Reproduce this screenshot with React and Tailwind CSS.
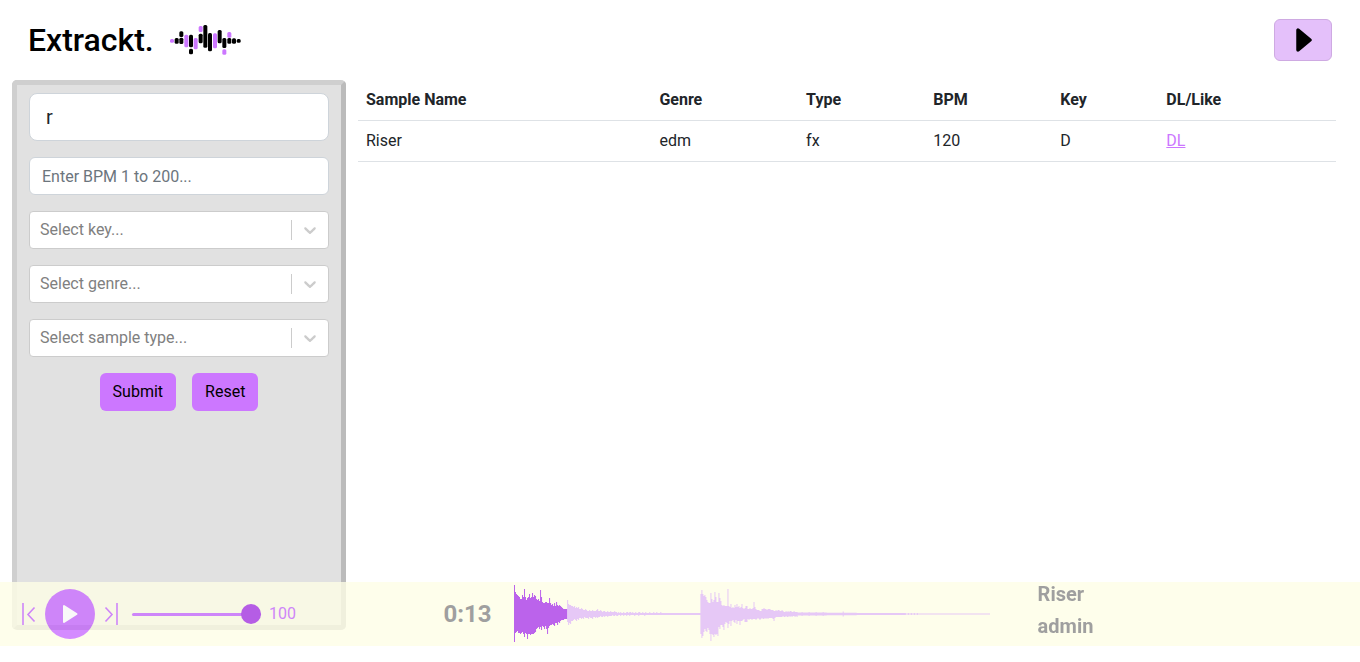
import React, { useState } from "react";

const LOGO_BARS = [
  [35, 72, 83, "p"], [49, 69, 86], [63, 49, 66], [63, 68, 87], [78, 59, 97, "p"],
  [92, 59, 97], [92, 101, 118], [106, 69, 103, "p"], [121, 33, 51, "p"], [121, 56, 85],
  [135, 30, 98], [149, 54, 109], [164, 55, 100, "p"], [178, 45, 85], [192, 69, 99],
  [192, 103, 119, "p"], [207, 51, 68, "p"], [207, 69, 86], [221, 70, 86], [235, 72, 83],
];

// Peak heights above and below the centre line, one pair per horizontal unit.
const UP_A = [29, 22, 20, 19, 18, 17, 15, 15, 19, 17, 25, 17, 14, 16, 17, 20, 16, 17, 21, 17, 19, 18, 15, 14, 15, 13, 24, 17, 12, 11, 11, 12, 12, 11, 11, 16, 11, 9, 10, 8, 11, 8, 12, 9, 8, 9, 8, 7, 6, 5, 5, 5, 5,
  14, 10, 9, 9, 8, 8, 7, 8, 6, 7, 6, 7, 5, 5, 6, 5, 4, 4, 5, 4, 3, 3, 4, 3, 3, 4, 3, 3, 3, 4, 5, 3, 3, 4, 3, 2, 3, 3, 2, 2, 3, 2, 2, 3, 2, 2, 2, 3, 2, 2, 1, 2, 1, 2, 1, 1, 2, 1, 1, 2, 2, 1, 2, 2, 1, 2, 1, 1, 2, 1, 1, 2, 2, 1, 1, 2, 1, 1, 2, 1, 1, 1, 2, 1, 1, 1, 2, 1, 1, 2, 1, 1, 1, 2, 1, 1];
const DOWN_A = [28, 19, 18, 17, 19, 19, 20, 19, 18, 20, 23, 19, 20, 25, 20, 20, 21, 20, 20, 20, 19, 18, 15, 14, 13, 15, 13, 16, 12, 13, 15, 12, 15, 20, 14, 12, 11, 11, 10, 11, 12, 9, 9, 11, 8, 9, 7, 6, 6, 6, 5, 5, 5,
  8, 11, 9, 10, 7, 7, 6, 5, 6, 7, 5, 6, 4, 4, 5, 4, 5, 3, 4, 4, 4, 5, 3, 4, 4, 5, 3, 3, 4, 3, 4, 3, 3, 2, 3, 3, 2, 3, 2, 2, 3, 2, 2, 2, 2, 1, 2, 2, 1, 2, 2, 1, 1, 2, 1, 1, 2, 1, 1, 2, 1, 1, 2, 1, 1, 1, 1, 2, 1, 1, 1, 2, 1, 1, 1, 1, 1, 2, 1, 1, 1, 1, 1, 1, 1, 1, 1, 1, 1, 1, 1, 1, 1, 1, 1, 1];
const UP_B = [24, 20, 18, 19, 17, 14, 12, 11, 11, 21, 15, 12, 14, 22, 17, 12, 12, 21, 16, 13, 9, 8, 9, 8, 8, 8, 25, 8, 7, 10, 6, 7, 6, 9, 7, 10, 7, 8, 6, 7, 10, 6, 5, 6, 8, 8, 5, 5, 6, 5, 5, 6, 12, 7, 5, 4, 4, 4, 3, 3, 5, 5, 6, 5, 5, 4, 5, 5, 5, 4, 4, 4, 3, 3, 4, 3, 4, 4, 3, 3, 4, 3, 2, 2, 3, 2, 3, 2, 3, 3, 2, 2, 3, 2, 2, 2];
const DOWN_B = [24, 22, 18, 15, 17, 18, 14, 16, 20, 27, 20, 21, 23, 20, 21, 20, 22, 13, 15, 11, 11, 13, 16, 10, 8, 9, 14, 10, 7, 12, 7, 6, 8, 9, 6, 10, 7, 7, 11, 7, 7, 6, 5, 8, 8, 8, 5, 6, 5, 5, 6, 5, 5, 5, 6, 5, 4, 5, 6, 5, 4, 5, 5, 4, 5, 4, 5, 4, 4, 4, 4, 5, 7, 4, 3, 3, 3, 3, 3, 3, 3, 2, 3, 3, 2, 3, 3, 2, 3, 2, 3, 2, 2, 3, 2, 3];

function peakAt(x, first, second) {
  if (x < 186) return first[x] ?? 1;
  if (x < 187) return 20;
  if (x < 187 + second.length) return second[x - 187];
  if (x < 312) return x % 7 === 0 ? 2 : 1.5;
  if (x < 342) return x === 328 ? 2.5 : 1.2;
  if (x < 390) return 1;
  return x < 404 && x % 3 === 0 ? 1 : 0.4;
}

// Stepped outline: each unit is drawn as a flat-topped column.
function wavePath(from, to) {
  const top = [];
  const bottom = [];
  for (let x = from; x < to; x += 1) {
    const up = 29 - peakAt(x, UP_A, UP_B);
    const down = 29 + peakAt(x, DOWN_A, DOWN_B);
    top.push(`${x} ${up}`, `${x + 1} ${up}`);
    bottom.unshift(`${x + 1} ${down}`, `${x} ${down}`);
  }
  return `M${top.concat(bottom).join("L")}Z`;
}

function Logo() {
  return (
    <svg viewBox="29 27 213 96" className="h-8 w-[71px]" aria-hidden="true">
      {LOGO_BARS.map(([x, y1, y2, tone]) => (
        <rect key={`${x}-${y1}`} x={x - 6} y={y1} width="12" height={y2 - y1} rx="4.5" fill={tone ? "#cc77ff" : "#000"} />
      ))}
    </svg>
  );
}

function SelectBox({ id, label, options }) {
  return (
    <div className="relative">
      <select id={id} aria-label={label} defaultValue="" className="block h-[38px] w-full appearance-none rounded border border-[#cccccc] bg-white pr-10 pl-[10px] text-base leading-6 text-[#808080]">
        <option value="">{label}</option>
        {options.map((o) => <option key={o}>{o}</option>)}
      </select>
      <div className="pointer-events-none absolute inset-y-0 right-px flex items-center">
        <span className="h-5 w-px bg-[#cccccc]" />
        <svg viewBox="0 0 20 20" className="mx-2 size-5 fill-[#cccccc]" aria-hidden="true">
          <path d="M4.516 7.548c0.436-0.446 1.043-0.481 1.576 0l3.908 3.747 3.908-3.747c0.533-0.481 1.141-0.446 1.574 0 0.436 0.445 0.408 1.197 0 1.615-0.406 0.418-4.695 4.502-4.695 4.502-0.217 0.223-0.502 0.335-0.787 0.335s-0.57-0.112-0.789-0.335c0 0-4.287-4.084-4.695-4.502s-0.436-1.17 0-1.615z" />
        </svg>
      </div>
    </div>
  );
}

function Player() {
  const [volume, setVolume] = useState(100);
  return (
    <footer className="fixed inset-x-0 bottom-4 grid h-16 grid-cols-[31%_92px_35%_1fr] items-center bg-[#fefee6] opacity-80">
      <div className="flex items-center pl-[21px] text-[#ca6fff]">
        <button type="button" aria-label="Previous" className="flex">
          <svg viewBox="0 0 16 24" className="h-6 w-4 fill-none stroke-current" aria-hidden="true">
            <path d="M2 1v22" strokeWidth="1.6" />
            <path d="M13.500 5.500L7 12.500l6.500 7" strokeWidth="1.600" />
          </svg>
        </button>
        <button type="button" aria-label="Play" className="mx-2 flex size-[50px] items-center justify-center rounded-full bg-[#ca6fff]">
          <svg viewBox="0 0 16 20" className="h-5 w-4 fill-white stroke-white" aria-hidden="true">
            <path d="M2 2v16L14.500 10z" strokeWidth="2" strokeLinejoin="round" />
          </svg>
        </button>
        <button type="button" aria-label="Next" className="flex">
          <svg viewBox="0 0 16 24" className="h-6 w-4 fill-none stroke-current" aria-hidden="true">
            <path d="M14 1v22" strokeWidth="1.6" />
            <path d="M2.500 5.500L9 12.500l-6.500 7" strokeWidth="1.600" />
          </svg>
        </button>
        <input
          type="range"
          id="volume"
          aria-label="Volume"
          min="0"
          max="100"
          value={volume}
          onChange={(e) => setVolume(Number(e.target.value))}
          className="ml-[13px] h-[3px] w-[129px] appearance-none rounded-full bg-[#ca6fff] [&::-webkit-slider-thumb]:size-5 [&::-webkit-slider-thumb]:appearance-none [&::-webkit-slider-thumb]:rounded-full [&::-webkit-slider-thumb]:bg-[#aa3ce6]"
        />
        <output htmlFor="volume" className="ml-2 text-base">{volume}</output>
      </div>
      <div className="text-center text-2xl font-bold text-[#888888]">0:13</div>
      <svg viewBox="0 0 475 58" preserveAspectRatio="none" className="h-[58px] w-full" role="img" aria-label="Waveform">
        <path d={wavePath(53, 475)} fill="#e0bbf4" />
        <path d={wavePath(0, 53)} fill="#aa3ce6" />
      </svg>
      <div className="self-start pl-12 text-xl leading-8 font-bold text-[#888888]">
        <p className="-mt-1">Riser</p>
        <p>admin</p>
      </div>
    </footer>
  );
}

export default function App() {
  return (
    <div className="min-h-screen bg-white font-['Roboto',sans-serif] text-base text-[#212529]">
      <header className="flex h-20 items-center justify-between px-7">
        <div className="flex items-center gap-4">
          <h1 className="text-[32px] font-medium text-black">Extrackt.</h1>
          <Logo />
        </div>
        <button type="button" aria-label="Open player" className="flex h-[42px] w-[58px] items-center justify-center rounded-md border border-[#ceaae2] bg-[#e4c0fa]">
          <svg viewBox="0 0 16 24" className="ml-0.5 h-6 w-4" aria-hidden="true">
            <path d="M2 2v20L14 12z" fill="#000" stroke="#000" strokeWidth="3.500" strokeLinejoin="round" />
          </svg>
        </button>
      </header>
      <main className="grid grid-cols-4 px-3">
        <form onSubmit={(e) => e.preventDefault()} className="flex min-h-[calc(100vh-112px)] flex-col gap-4 rounded-[5px] border-[5px] border-t-[#cfcfcf] border-r-[#bbbbbb] border-b-[#bbbbbb] border-l-[#cfcfcf] bg-[#e1e1e1] px-3 py-2">
          <input type="text" aria-label="Search samples" defaultValue="r" className="h-12 w-full rounded-lg border border-[#ced4da] bg-white px-4 text-xl" />
          <input type="text" aria-label="BPM" placeholder="Enter BPM 1 to 200..." className="h-[38px] w-full rounded-md border border-[#ced4da] bg-white px-3 placeholder:text-[#6c757d]" />
          <SelectBox id="key" label="Select key..." options={["C", "D", "E"]} />
          <SelectBox id="genre" label="Select genre..." options={["edm"]} />
          <SelectBox id="type" label="Select sample type..." options={["fx"]} />
          <div className="flex justify-center gap-4 text-black">
            <button type="submit" className="h-[38px] rounded-md bg-[#cc77ff] px-[13px]">Submit</button>
            <button type="reset" className="h-[38px] rounded-md bg-[#cc77ff] px-[13px]">Reset</button>
          </div>
        </form>
        <section className="col-span-3 px-3">
          <table className="w-full table-fixed border-collapse text-left">
            <thead>
              <tr className="border-b border-[#dee2e6]">
                <th className="w-[30%] p-2 font-bold">Sample Name</th>
                <th className="w-[15%] p-2 font-bold">Genre</th>
                <th className="w-[13%] p-2 font-bold">Type</th>
                <th className="w-[13%] p-2 font-bold">BPM</th>
                <th className="w-[106px] p-2 font-bold">Key</th>
                <th className="p-2 font-bold">DL/Like</th>
              </tr>
            </thead>
            <tbody>
              <tr className="border-b border-[#dee2e6]">
                <td className="p-2">Riser</td>
                <td className="p-2">edm</td>
                <td className="p-2">fx</td>
                <td className="p-2">120</td>
                <td className="p-2">D</td>
                <td className="p-2"><a href="#download" className="text-[#cc77ff] underline">DL</a></td>
              </tr>
            </tbody>
          </table>
        </section>
      </main>
      <Player />
    </div>
  );
}
